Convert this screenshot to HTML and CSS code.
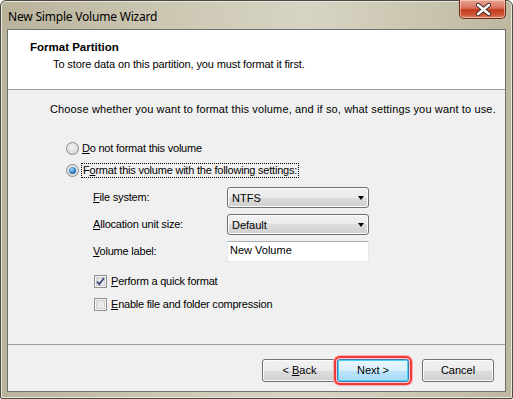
FILE: index.html
```html
<!DOCTYPE html>
<html>
<head>
<meta charset="utf-8">
<link rel="stylesheet" href="styles.css">
</head>
<body>
<div class="window">
  <div class="titlebar">
    <span class="title">New Simple Volume Wizard</span>
    <div class="close">
      <svg width="47" height="19" viewBox="0 0 47 19">
        <path d="M18 5 L29 14 M29 5 L18 14" stroke="#3b2a24" stroke-width="4.2" stroke-linecap="round"/>
        <path d="M18 5 L29 14 M29 5 L18 14" stroke="#ffffff" stroke-width="2.4" stroke-linecap="round"/>
      </svg>
    </div>
  </div>
  <div class="client">
    <div class="header">
      <div class="h-title">Format Partition</div>
      <div class="h-sub">To store data on this partition, you must format it first.</div>
    </div>
    <div class="body">
      <div class="intro">Choose whether you want to format this volume, and if so, what settings you want to use.</div>
      <div class="radio-row"><span class="radio"></span><span class="lbl"><u>D</u>o not format this volume</span></div>
      <div class="radio-row second"><span class="radio checked"></span><span class="lbl focus">F<u>o</u>rmat this volume with the following settings:</span></div>
      <div class="settings">
        <div class="set-row">
          <span class="set-label"><u>F</u>ile system:</span>
          <div class="combo"><span>NTFS</span><span class="arrow"></span></div>
        </div>
        <div class="set-row">
          <span class="set-label"><u>A</u>llocation unit size:</span>
          <div class="combo"><span>Default</span><span class="arrow"></span></div>
        </div>
        <div class="set-row">
          <span class="set-label"><u>V</u>olume label:</span>
          <div class="textbox">New Volume</div>
        </div>
        <div class="check-row first">
          <span class="check checked">
            <svg width="13" height="13" viewBox="0 0 13 13"><path d="M3 6.5 L5.3 9.2 L10 3" fill="none" stroke="#3d4f86" stroke-width="1.8"/></svg>
          </span>
          <span class="lbl"><u>P</u>erform a quick format</span>
        </div>
        <div class="check-row">
          <span class="check"></span>
          <span class="lbl"><u>E</u>nable file and folder compression</span>
        </div>
      </div>
    </div>
    <div class="footer">
      <div class="btn"><span>&lt; <u>B</u>ack</span></div>
      <div class="btn default"><span>Next &gt;</span></div>
      <div class="btn cancel"><span>Cancel</span></div>
    </div>
  </div>
</div>
</body>
</html>
```

FILE: styles.css
```css
* { box-sizing: border-box; }
html, body { margin: 0; padding: 0; }
body {
  background: #ffffff;
  font-family: "Liberation Sans", Arial, sans-serif;
  font-size: 11px;
  color: #000;
}
.window {
  width: 513px;
  height: 399px;
  border: 1px solid #4a4a44;
  border-radius: 6px 6px 2px 2px;
  background: linear-gradient(90deg, #b9b39c 0%, #cbc6b1 30%, #d8d4c4 60%, #c8c3ad 85%, #bdb7a0 100%);
  padding: 0 6px 6px 6px;
  display: flex;
  flex-direction: column;
  box-shadow: inset 0 0 0 1px #e9e6da;
}
.titlebar {
  height: 28px;
  display: flex;
  justify-content: space-between;
  align-items: flex-start;
  padding-left: 1px;
}
.title {
  font-family: "Noto Sans", "Open Sans", sans-serif;
  font-size: 12px;
  margin-top: 7px;
  color: #000;
  letter-spacing: -0.2px;
}
.close {
  width: 47px;
  height: 19px;
  margin-top: -1px;
  border: 1px solid #6e2d22;
  border-top: none;
  border-radius: 0 0 5px 5px;
  background: linear-gradient(180deg, #e8a493 0%, #d8735e 45%, #c2391d 55%, #cf5a3c 85%, #e28a6e 100%);
  box-shadow: inset 0 0 0 1px rgba(255,220,200,0.55);
}
.close svg { display: block; }
.client {
  flex: 1;
  border: 1px solid #707070;
  background: #f0f0f0;
  display: flex;
  flex-direction: column;
}
.header {
  height: 60px;
  background: #ffffff;
  border-bottom: 1px solid #a0a0a0;
  padding: 11px 0 0 22px;
}
.h-title {
  font-weight: bold;
  line-height: 13px;
  font-size: 11.5px;
}
.h-sub {
  margin-top: 4px;
  padding-left: 23px;
  line-height: 13px;
  letter-spacing: -0.12px;
}
.body {
  flex: 1;
  padding: 13px 0 0 42px;
  border-bottom: 1px solid #a0a0a0;
}
.intro { line-height: 13px; letter-spacing: 0.14px; }
.radio-row {
  display: flex;
  align-items: center;
  height: 14px;
  margin-top: 25px;
  padding-left: 16px;
}
.radio-row.second { margin-top: 8px; }
.radio {
  width: 13px;
  height: 13px;
  border-radius: 50%;
  border: 1px solid #8a8a8a;
  background: radial-gradient(circle at 45% 40%, #f4f4f4 0%, #dcdcdc 70%, #cfcfcf 100%);
  margin-right: 3px;
  position: relative;
}
.radio.checked::after {
  content: "";
  position: absolute;
  left: 2px;
  top: 2px;
  width: 7px;
  height: 7px;
  border-radius: 50%;
  background: radial-gradient(circle at 40% 35%, #a9d8f5 0%, #2b7cc5 55%, #13407c 100%);
}
.lbl { line-height: 13px; letter-spacing: -0.22px; }
.focus {
  outline: 1px dotted #000;
  outline-offset: 0;
  padding: 0 1px;
}
.settings {
  padding-left: 43px;
  margin-top: 10px;
}
.set-row {
  display: flex;
  align-items: center;
  height: 21px;
  margin-bottom: 6px;
}
.set-label {
  width: 134px;
  line-height: 13px;
  letter-spacing: -0.2px;
}
.combo {
  width: 142px;
  height: 21px;
  border: 1px solid #707070;
  border-radius: 3px;
  background: linear-gradient(180deg, #f2f2f2 0%, #ebebeb 50%, #dddddd 50%, #cfcfcf 100%);
  box-shadow: inset 0 0 0 1px #fcfcfc;
  display: flex;
  align-items: center;
  justify-content: space-between;
  padding: 0 4px 0 4px;
}
.arrow {
  width: 0;
  height: 0;
  border-left: 3.5px solid transparent;
  border-right: 3.5px solid transparent;
  border-top: 4px solid #000;
}
.textbox {
  width: 142px;
  height: 21px;
  background: #fff;
  border: 1px solid #e3e9ef;
  border-top-color: #abadb3;
  padding: 2px 0 0 2px;
  line-height: 13px;
}
.check-row {
  display: flex;
  align-items: center;
  height: 14px;
  margin-top: 9px;
  padding-left: 1px;
}
.check-row.first { margin-top: 12px; }
.check {
  width: 13px;
  height: 13px;
  border: 1px solid #8e8f8f;
  background: linear-gradient(135deg, #dcdcdc 0%, #f4f4f4 100%);
  box-shadow: inset 0 0 0 1px #f4f4f4, inset 0 0 0 2px #d0d0d0;
  margin-right: 4px;
  position: relative;
}
.check svg {
  position: absolute;
  left: -1px;
  top: -1px;
}
.footer {
  height: 46px;
  display: flex;
  align-items: flex-start;
  padding: 14px 0 0 254px;
}
.btn {
  width: 75px;
  height: 23px;
  border: 1px solid #707070;
  border-radius: 3px;
  background: linear-gradient(180deg, #f2f2f2 0%, #ebebeb 50%, #dddddd 50%, #cfcfcf 100%);
  box-shadow: inset 0 0 0 1px #fcfcfc;
  display: flex;
  align-items: center;
  justify-content: center;
  line-height: 13px;
  white-space: pre;
}
.btn.default {
  width: 72px;
  border-color: #3c7fb1;
  background: linear-gradient(180deg, #eaf6fd 0%, #d9f0fc 50%, #bee6fd 50%, #a7d9f5 100%);
  box-shadow: inset 0 0 0 1px #48d2f7, 0 0 0 1px #fbc9c9, 0 0 0 3px #f03a3a, 0 0 0 4px #f8b0b0;
  position: relative;
  z-index: 1;
}
.btn.cancel { margin-left: 13px; width: 72px; }
```
